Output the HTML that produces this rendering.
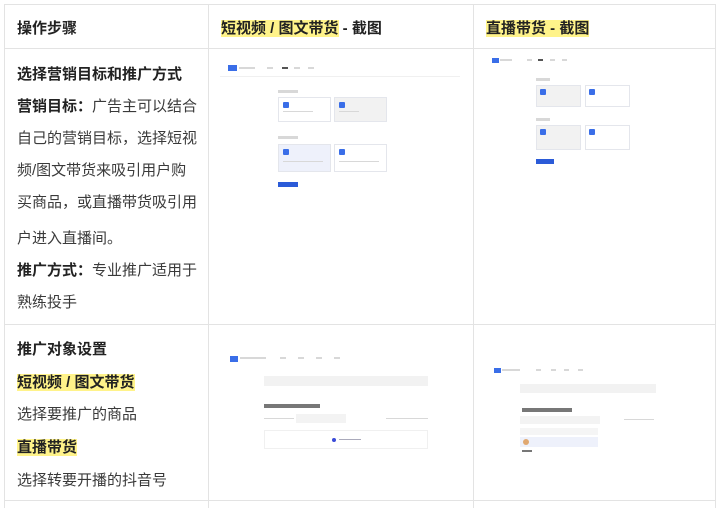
<!DOCTYPE html><html><head><meta charset="utf-8"><style>
*{margin:0;padding:0;box-sizing:border-box}
body{width:720px;height:508px;background:#fff;font-family:"Liberation Sans","Noto Sans CJK SC",sans-serif;color:#3a3a3a;position:relative;overflow:hidden}
.l{position:absolute;background:#e3e3e3}
.t{position:absolute;font-size:15px;white-space:nowrap;line-height:20px}
b{font-weight:bold;color:#222}
.hl{background:#fff38a}
.a{position:absolute}
.g{position:absolute;background:#d8d8d8;height:2px}
.card{position:absolute;border:1px solid #e4e6ec;background:#fff}
.btn{position:absolute;background:#2b5bd8;height:5px}
.ic{position:absolute;width:6px;height:6px;background:#3a6ee8;border-radius:1px}
</style></head><body>
<div class="l" style="left:4px;top:4px;width:712px;height:1px"></div>
<div class="l" style="left:4px;top:48px;width:712px;height:1px"></div>
<div class="l" style="left:4px;top:324px;width:712px;height:1px"></div>
<div class="l" style="left:4px;top:500px;width:712px;height:1px"></div>
<div class="l" style="left:4px;top:4px;width:1px;height:504px"></div>
<div class="l" style="left:208px;top:4px;width:1px;height:504px"></div>
<div class="l" style="left:473px;top:4px;width:1px;height:504px"></div>
<div class="l" style="left:715px;top:4px;width:1px;height:504px"></div>

<div class="t" style="left:17px;top:19px"><b>操作步骤</b></div>
<div class="t" style="left:221px;top:19px"><b><span class="hl">短视频 / 图文带货</span> - 截图</b></div>
<div class="t" style="left:486px;top:19px"><b><span class="hl">直播带货 - 截图</span></b></div>

<div class="t" style="left:17px;top:65px"><b>选择营销目标和推广方式</b></div>
<div class="t" style="left:17px;top:97px"><b>营销目标：</b>广告主可以结合</div>
<div class="t" style="left:17px;top:129px">自己的营销目标，选择短视</div>
<div class="t" style="left:17px;top:161px">频/图文带货来吸引用户购</div>
<div class="t" style="left:17px;top:193px">买商品，或直播带货吸引用</div>
<div class="t" style="left:17px;top:229px">户进入直播间。</div>
<div class="t" style="left:17px;top:261px"><b>推广方式：</b>专业推广适用于</div>
<div class="t" style="left:17px;top:293px">熟练投手</div>

<div class="t" style="left:17px;top:340px"><b>推广对象设置</b></div>
<div class="t" style="left:17px;top:373px"><b class="hl">短视频 / 图文带货</b></div>
<div class="t" style="left:17px;top:405px">选择要推广的商品</div>
<div class="t" style="left:17px;top:438px"><b class="hl">直播带货</b></div>
<div class="t" style="left:17px;top:471px">选择转要开播的抖音号</div>

<div class="a" style="left:228px;top:65px;width:9px;height:6px;background:#3a6ee8"></div>
<div class="g" style="left:239px;top:67px;width:16px"></div>
<div class="g" style="left:267px;top:67px;width:6px"></div><div class="g" style="left:282px;top:67px;width:6px;background:#555"></div><div class="g" style="left:294px;top:67px;width:6px"></div><div class="g" style="left:308px;top:67px;width:6px"></div>
<div class="l" style="left:220px;top:76px;width:240px;height:1px;background:#f0f0f0"></div>
<div class="g" style="left:278px;top:90px;width:20px;height:3px"></div>
<div class="card" style="left:278px;top:97px;width:53px;height:25px"><div class="ic" style="left:4px;top:4px"></div><div class="g" style="left:4px;top:13px;width:30px;height:1px"></div></div>
<div class="card" style="left:334px;top:97px;width:53px;height:25px;background:#f2f2f2"><div class="ic" style="left:4px;top:4px"></div><div class="g" style="left:4px;top:13px;width:20px;height:1px"></div></div>
<div class="g" style="left:278px;top:136px;width:20px;height:3px"></div>
<div class="card" style="left:278px;top:144px;width:53px;height:28px;background:#eef1fb"><div class="ic" style="left:4px;top:4px"></div><div class="g" style="left:4px;top:16px;width:40px;height:1px"></div></div>
<div class="card" style="left:334px;top:144px;width:53px;height:28px"><div class="ic" style="left:4px;top:4px"></div><div class="g" style="left:4px;top:16px;width:40px;height:1px"></div></div>
<div class="btn" style="left:278px;top:182px;width:20px"></div>

<div class="a" style="left:492px;top:58px;width:7px;height:5px;background:#3a6ee8"></div>
<div class="g" style="left:500px;top:59px;width:12px"></div>
<div class="g" style="left:527px;top:59px;width:5px"></div><div class="g" style="left:538px;top:59px;width:5px;background:#555"></div><div class="g" style="left:550px;top:59px;width:5px"></div><div class="g" style="left:562px;top:59px;width:5px"></div>
<div class="g" style="left:536px;top:78px;width:14px;height:3px"></div>
<div class="card" style="left:536px;top:85px;width:45px;height:22px;background:#f2f2f2"><div class="ic" style="left:3px;top:3px"></div></div>
<div class="card" style="left:585px;top:85px;width:45px;height:22px"><div class="ic" style="left:3px;top:3px"></div></div>
<div class="g" style="left:536px;top:118px;width:14px;height:3px"></div>
<div class="card" style="left:536px;top:125px;width:45px;height:25px;background:#f2f2f2"><div class="ic" style="left:3px;top:3px"></div></div>
<div class="card" style="left:585px;top:125px;width:45px;height:25px"><div class="ic" style="left:3px;top:3px"></div></div>
<div class="btn" style="left:536px;top:159px;width:18px"></div>

<div class="a" style="left:230px;top:356px;width:8px;height:6px;background:#3a6ee8"></div>
<div class="g" style="left:240px;top:357px;width:26px"></div>
<div class="g" style="left:280px;top:357px;width:6px"></div><div class="g" style="left:298px;top:357px;width:6px"></div><div class="g" style="left:316px;top:357px;width:6px"></div><div class="g" style="left:334px;top:357px;width:6px"></div>
<div class="a" style="left:264px;top:376px;width:164px;height:10px;background:#f2f2f2"></div>
<div class="g" style="left:264px;top:404px;width:56px;height:4px;background:#777"></div>
<div class="g" style="left:264px;top:418px;width:30px;height:1px"></div>
<div class="a" style="left:296px;top:414px;width:50px;height:9px;background:#f3f3f3"></div>
<div class="g" style="left:386px;top:418px;width:42px;height:1px"></div>
<div class="card" style="left:264px;top:430px;width:164px;height:19px;border-color:#f0f0f0"><div class="a" style="left:67px;top:7px;width:4px;height:4px;border-radius:50%;background:#3a4bd8"></div><div class="g" style="left:74px;top:8px;width:22px;height:1px;background:#aab"></div></div>

<div class="a" style="left:494px;top:368px;width:7px;height:5px;background:#3a6ee8"></div>
<div class="g" style="left:502px;top:369px;width:18px"></div>
<div class="g" style="left:536px;top:369px;width:5px"></div><div class="g" style="left:551px;top:369px;width:5px"></div><div class="g" style="left:564px;top:369px;width:5px"></div><div class="g" style="left:578px;top:369px;width:5px"></div>
<div class="a" style="left:520px;top:384px;width:136px;height:9px;background:#f2f2f2"></div>
<div class="g" style="left:522px;top:408px;width:50px;height:4px;background:#777"></div>
<div class="a" style="left:520px;top:416px;width:80px;height:8px;background:#f3f3f3"></div>
<div class="g" style="left:624px;top:419px;width:30px;height:1px"></div>
<div class="a" style="left:520px;top:428px;width:78px;height:7px;background:#f5f5f5"></div>
<div class="a" style="left:520px;top:437px;width:78px;height:10px;background:#eef1fb"><div class="a" style="left:3px;top:2px;width:6px;height:6px;border-radius:50%;background:#e0a870"></div></div>
<div class="g" style="left:522px;top:450px;width:10px;height:2px;background:#777"></div>
</body></html>
